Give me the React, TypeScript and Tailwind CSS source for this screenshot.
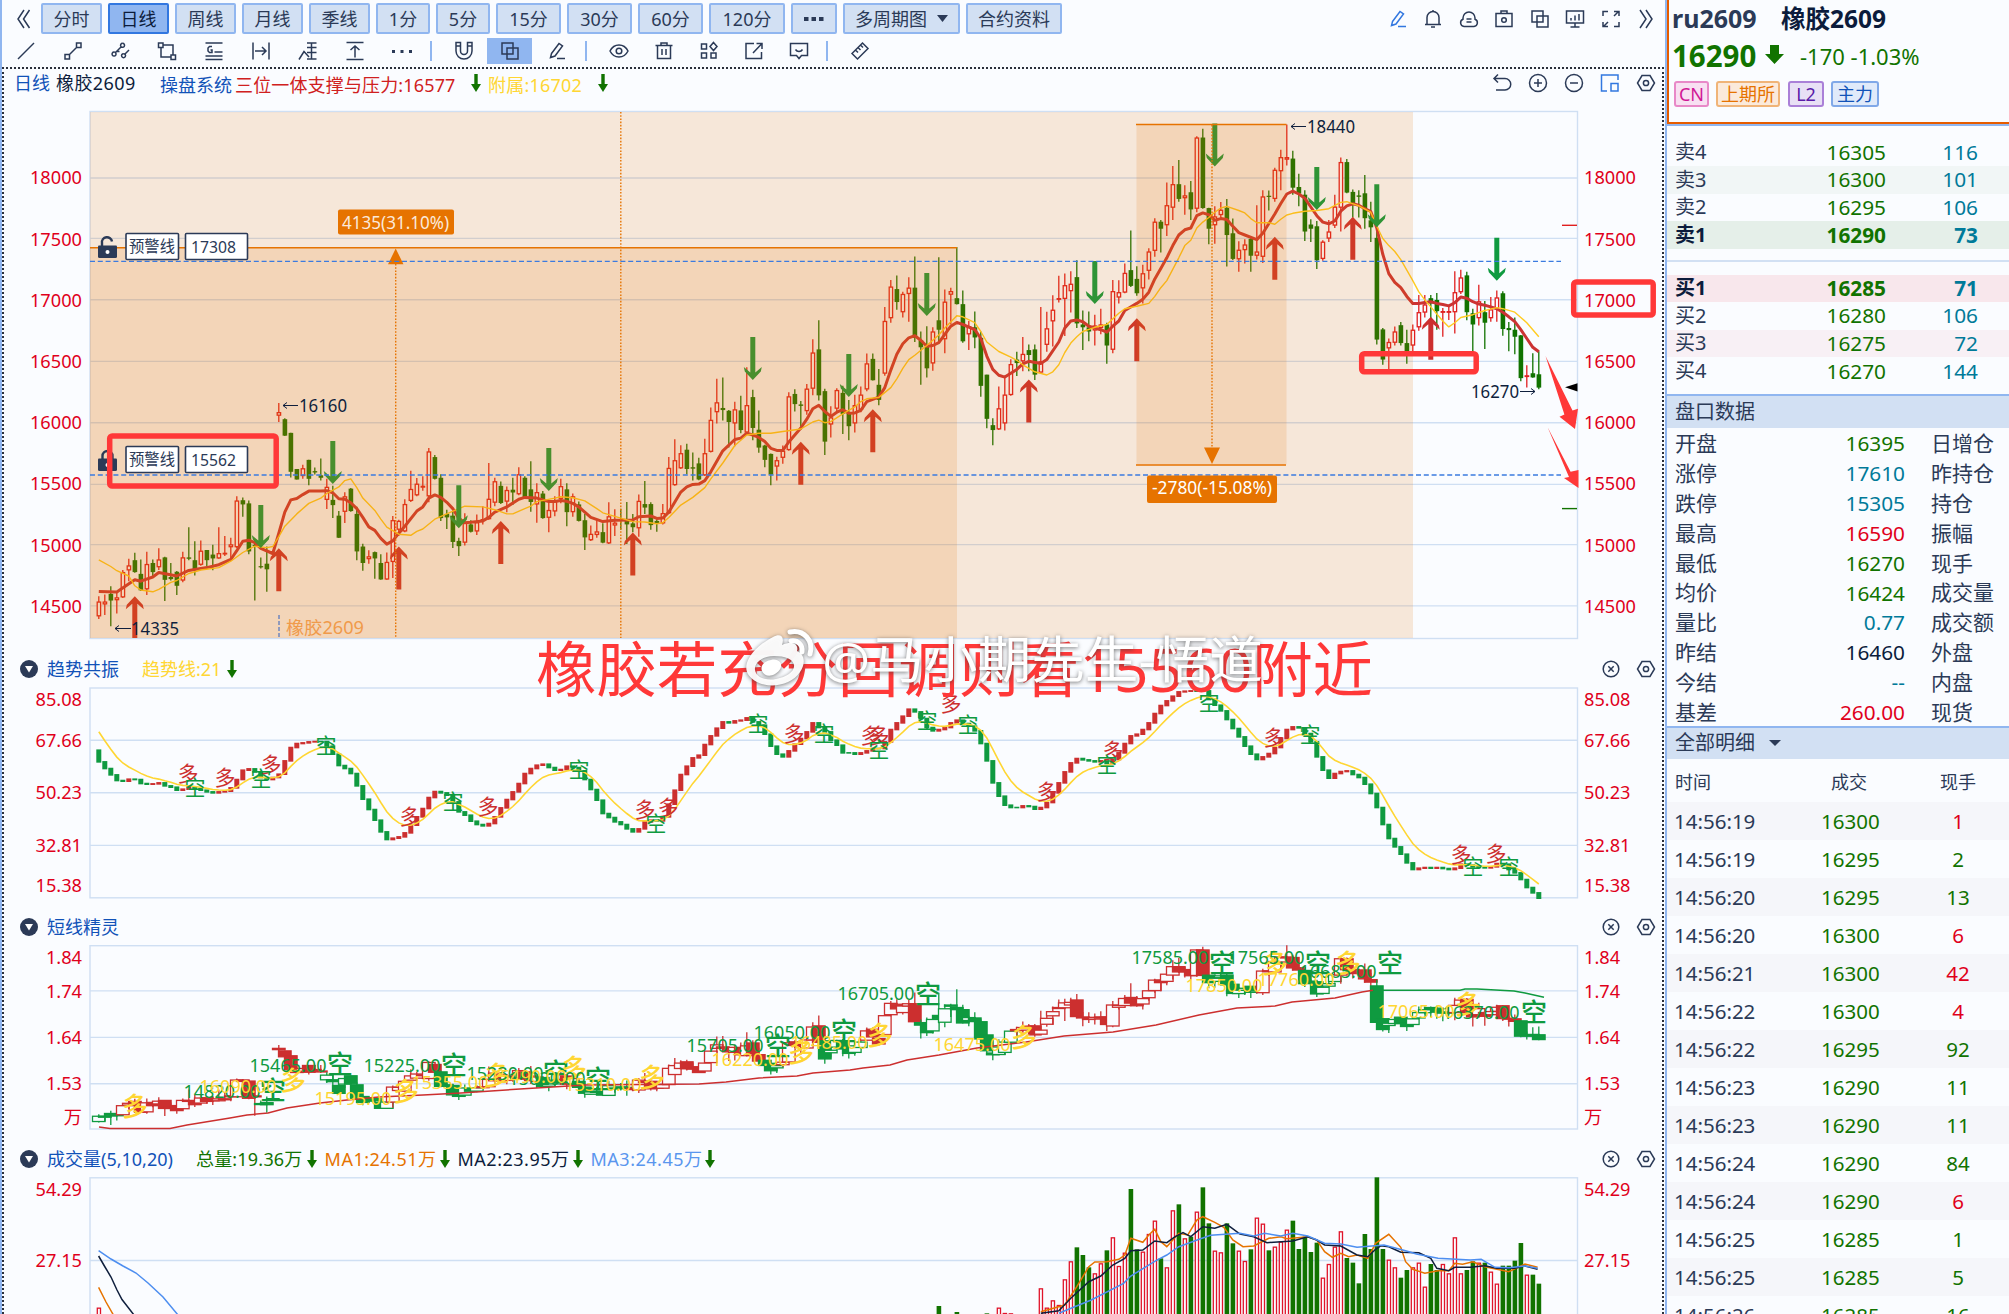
import type { ReactNode } from "react";

type Point = [number, number];

// one entry per day: direction, then high / body top / body bottom / low
const DAYS = `r1415,1430,1472,1480 r1410,1430,1438,1468 g1386,1408,1427,1500 r1405,1418,1426,1464 r1340,1346,1418,1420 r1308,1327,1341,1372 g1291,1312,1346,1348 g1310,1351,1398,1400 r1288,1323,1395,1411 g1310,1320,1346,1358
r1278,1310,1332,1340 g1302,1304,1368,1428 g1320,1360,1366,1370 g1343,1345,1385,1411 r1288,1304,1370,1375 g1218,1304,1308,1312 g1258,1312,1338,1356 r1256,1285,1325,1328 g1283,1283,1312,1330 g1268,1296,1307,1341
r1218,1292,1307,1308 r1243,1291,1295,1300 r1248,1267,1275,1310 r1130,1142,1275,1278 g1133,1141,1153,1188 g1142,1150,1287,1295 g1265,1268,1270,1427 g1304,1329,1331,1336 g1273,1322,1338,1402 r1285,1290,1294,1298
r864,890,900,918 g907,910,957,958 g949,949,1060,1076 g1052,1052,1082,1082 r1040,1050,1072,1080 g1026,1026,1080,1098 g1048,1058,1062,1068 g1022,1070,1077,1085 r1080,1103,1140,1166 g1100,1140,1155,1192
g1172,1185,1248,1249 r1118,1130,1174,1206 g1106,1108,1172,1174 g1160,1180,1287,1312 g1265,1273,1320,1342 r1284,1301,1309,1322 g1287,1289,1307,1365 g1295,1320,1367,1368 r1290,1317,1367,1368 r1186,1198,1317,1363
r1197,1200,1225,1243 r1138,1152,1230,1232 r1057,1109,1143,1146 r1078,1094,1127,1130 r1073,1100,1105,1114 r992,1002,1130,1147 g1012,1018,1080,1082 g1067,1077,1192,1200 g1168,1180,1190,1223 g1172,1185,1260,1277
g1248,1257,1272,1300 r1178,1205,1262,1270 g1198,1210,1231,1233 r1182,1204,1230,1240 r1158,1195,1200,1210 r1035,1137,1195,1197 r1077,1087,1148,1158 g1088,1100,1149,1152 r1102,1112,1145,1175 g1077,1111,1119,1155
r1047,1067,1124,1127 g1073,1077,1135,1137 g1030,1110,1146,1174 r1093,1118,1153,1205 g1115,1122,1192,1194 r1147,1169,1191,1232 r1130,1143,1173,1187 r1080,1101,1137,1150 g1093,1110,1175,1215 r1122,1130,1175,1188
g1145,1153,1200,1202 g1180,1198,1247,1283 r1213,1237,1255,1257 r1195,1230,1240,1248 g1207,1232,1262,1264 r1147,1187,1264,1266 r1167,1205,1213,1243 g1165,1196,1200,1225 g1146,1200,1210,1266 g1180,1207,1218,1232
r1125,1143,1221,1245 g1086,1152,1162,1180 g1147,1152,1212,1225 g1195,1200,1207,1231 r1152,1178,1207,1210 r1018,1049,1178,1180 r967,1027,1098,1100 r984,1007,1050,1052 g980,997,1052,1067 g1005,1047,1051,1085
g1020,1036,1082,1084 r966,1007,1070,1072 r877,912,1003,1005 r795,862,890,922 g791,878,884,914 g884,886,918,991 r860,882,922,987 g843,885,941,950 r762,870,948,955 g826,847,935,970
g885,940,991,1006 g983,985,1026,1047 g1008,1009,1068,1098 r1017,1027,1045,1085 r985,1000,1020,1037 r833,845,998,1000 g825,838,867,888 g858,868,872,940 r810,823,887,897 r682,720,823,842
g628,711,842,857 g823,830,974,1012 r873,905,925,962 r822,827,880,893 g815,835,895,952 g855,893,930,970 r840,870,922,948 r817,840,883,890 r723,751,825,830 g723,738,799,800
g767,812,855,870 r590,630,780,786 r513,532,622,635 g500,539,576,598 r547,553,605,620 r505,535,553,632 g446,535,678,690 g660,685,705,812 g645,703,765,791 r648,660,751,772
g448,628,655,690 r540,575,682,722 r535,545,555,640 g419,565,582,583 g543,582,688,692 r630,645,668,713 g603,648,677,708 g660,678,815,846 g783,783,909,936 g907,927,941,984
r817,879,939,941 r787,840,922,942 r739,753,841,843 g718,740,750,787 r676,724,745,773 g697,713,727,773 g697,711,783,798 r590,745,777,780 r604,651,698,718 r557,598,631,703
r501,565,568,577 r495,528,567,673 r488,524,545,606 g457,505,637,650 g600,640,648,713 g603,648,660,688 r612,643,657,700 r595,640,650,668 g635,640,700,752 r513,545,712,722
r514,548,563,580 r466,493,549,551 g372,485,530,533 g474,510,551,558 r470,494,537,580 r423,432,487,512 r337,347,430,447 g342,347,367,435 r235,300,357,388 r188,240,307,342
g171,240,282,290 r243,272,280,327 g231,263,312,342 r103,107,310,320 g82,107,308,310 g307,308,367,411 r303,332,357,410 r291,313,328,342 g282,307,385,475 g338,380,453,456
r403,427,454,490 r397,412,428,466 g393,396,444,490 r300,432,444,455 r257,275,447,465 g258,273,276,315 r193,199,282,290 r142,163,203,257 r70,163,170,187 g145,167,250,270
g210,248,267,303 g257,270,375,402 g340,355,367,405 g345,360,457,482 r400,404,453,458 r342,375,395,405 r270,304,358,365 r164,177,307,375 g168,177,264,266 g255,262,295,335
g257,272,276,335 g214,266,337,367 g290,343,363,405 g345,393,683,697 g650,654,740,755 r680,690,708,768 r646,660,692,700 g633,642,693,700 g655,693,716,752 r640,655,700,716
r556,605,648,658 r556,583,606,620 g556,565,580,640 g550,570,602,655 r593,602,605,675 r585,602,606,627 r488,548,605,666 r484,506,548,553 g490,500,605,628 g595,608,640,716
r527,574,622,643 g573,605,635,710 r562,597,622,632 r543,563,595,632 g545,551,653,672 g633,650,656,716 g620,655,675,725 g670,671,793,802 r756,785,789,820 g722,779,791,792 g716,782,820,825`
  .split(/\s+/)
  .map((d) => {
    const [high, top, bottom, low] = d.slice(1).split(",").map(Number);
    return { up: d[0] === "r", high, top, bottom, low };
  });

const SUPPORT =
  "0,1401 3,1403 6,1368 7,1372 9,1360 10,1347 13,1357 15,1341 18,1333 20,1325 22,1310 23,1285 24,1258 25,1255 26,1262 27,1278 29,1293 30,1235 31,1175 32,1140 33,1136 34,1125 35,1115 37,1115 38,1114 39,1120 40,1137 41,1138 42,1148 43,1165 44,1190 45,1217 46,1227 47,1250 48,1266 49,1257 50,1235 51,1215 53,1172 54,1160 55,1135 56,1126 57,1133 58,1147 59,1165 60,1192 61,1205 62,1204 64,1200 65,1190 66,1175 68,1160 70,1138 71,1133 73,1135 74,1140 75,1145 76,1145 77,1142 78,1144 79,1150 80,1160 82,1190 84,1202 86,1198 89,1197 90,1188 92,1186 93,1193 94,1192 95,1175 97,1118 98,1103 99,1096 100,1095 101,1085 102,1060 104,1000 106,968 107,964 108,950 109,955 110,962 111,974 112,993 113,999 114,999 115,975 117,935 118,910 119,880 120,870 121,888 122,902 123,890 124,883 125,893 126,892 127,885 128,860 130,847 131,820 132,770 133,725 134,695 135,678 136,672 137,685 138,702 139,700 140,692 141,668 142,645 143,634 144,640 146,655 147,680 148,730 149,768 150,785 151,790 153,768 154,752 155,745 157,751 158,740 160,690 161,650 162,630 163,627 164,632 165,645 167,655 168,662 169,645 170,630 171,600 173,580 174,568 175,548 176,510 177,480 178,450 179,415 180,385 181,370 182,365 183,330 184,322 185,327 186,343 187,338 188,341 189,360 190,378 191,385 193,398 194,380 196,325 197,295 198,268 199,260 200,268 201,280 202,305 203,330 204,348 205,353 206,345 207,317 208,302 209,296 210,300 211,310 212,318 213,365 214,440 215,495 216,520 217,535 218,560 219,580 220,580 221,577 222,575 223,580 224,583 225,587 226,578 227,562 228,565 229,575 230,582 231,585 232,590 233,595 234,605 235,618 236,632 237,655 238,680 239,705 240,718";
const ATTACHED =
  "0,1311 2,1330 3,1342 5,1357 6,1385 7,1397 9,1402 10,1395 12,1375 13,1370 15,1350 17,1340 20,1333 22,1315 24,1290 26,1272 28,1276 29,1273 30,1245 31,1215 33,1180 35,1150 37,1135 38,1122 40,1103 41,1085 42,1080 43,1105 44,1135 46,1170 47,1195 48,1218 50,1238 52,1241 53,1230 54,1223 56,1195 58,1180 60,1165 61,1158 64,1160 66,1168 68,1180 69,1180 71,1165 72,1158 73,1145 76,1135 77,1131 79,1134 81,1143 83,1165 84,1177 87,1192 89,1202 91,1203 93,1208 94,1205 95,1190 97,1155 99,1133 101,1105 102,1080 104,1035 106,985 108,955 110,950 112,950 114,945 117,938 119,918 120,913 121,920 122,917 124,895 126,875 127,860 128,852 130,848 132,820 133,795 134,765 135,740 136,728 138,700 140,670 141,650 143,615 144,618 146,635 147,660 148,690 150,717 152,733 153,742 154,755 156,775 158,784 159,775 160,755 161,720 162,693 163,675 164,660 166,648 168,640 170,608 171,595 173,588 175,580 176,560 177,535 178,515 180,450 181,415 182,400 183,365 184,348 185,335 186,320 187,308 188,303 190,315 191,322 192,338 193,350 195,350 196,354 197,340 198,328 199,323 201,317 203,315 205,310 207,292 208,290 210,302 212,320 213,360 214,395 215,415 216,432 217,455 218,485 219,515 220,547 221,570 222,590 223,610 224,630 225,647 226,635 227,620 229,612 231,600 233,592 234,595 236,605 237,620 238,635 239,655 240,675";

const DOWN_ARROWS: Point[] = [[27, 1155], [39, 972], [60, 1098], [75, 992], [109, 676], [125, 724], [138, 493], [166, 459], [186, 67], [203, 191], [213, 240], [233, 393]];
const UP_ARROWS: Point[] = [[6, 1415], [30, 1278], [50, 1273], [67, 1200], [89, 1233], [117, 974], [129, 882], [155, 797], [173, 622], [196, 390], [209, 333], [222, 618]];

const TREND = [
  365, 385, 404, 421, 423, 417, 418, 430, 432, 431, 428, 437, 441, 450, 447, 441, 445, 450, 455, 458, 455, 453, 443, 418, 390, 386, 395, 412, 418, 412,
  402, 362, 322, 310, 308, 305, 304, 304, 318, 342, 376, 385, 400, 437, 477, 508, 540, 575, 598, 594, 590, 578, 555, 530, 505, 472, 454, 458, 465, 485,
  515, 525, 543, 553, 557, 550, 530, 503, 478, 455, 430, 400, 385, 375, 372, 382, 390, 388, 378, 382, 392, 418, 448, 480, 520, 532, 545, 553, 566, 575,
  566, 545, 540, 542, 530, 492, 450, 403, 378, 353, 345, 313, 287, 264, 245, 248, 242, 240, 233, 245, 255, 282, 318, 342, 350, 332, 312, 295, 275, 248,
  262, 275, 300, 315, 338, 338, 342, 338, 332, 325, 325, 305, 268, 248, 228, 207, 215, 235, 262, 272, 268, 262, 248, 240, 250, 258, 272, 310, 362, 428,
  468, 495, 502, 502, 497, 499, 507, 502, 487, 458, 428, 395, 368, 355, 359, 362, 365, 362, 370, 358, 338, 310, 287, 282, 268, 248, 220, 196, 182, 168,
  155, 153, 152, 153, 152, 178, 195, 212, 238, 265, 290, 318, 342, 358, 350, 340, 322, 295, 268, 260, 263, 280, 305, 350, 390, 414, 400, 394, 392, 403,
  412, 432, 460, 502, 553, 595, 620, 642, 668, 688, 684, 682, 684, 682, 685, 688, 684, 672, 675, 680, 682, 683, 680, 670, 672, 688, 698, 718, 742, 758, 774,
];

const TREND_LONG: Point[] = [[188, 773], [225, 777], [271, 764], [410, 816], [488, 806], [645, 809], [668, 807], [794, 733], [871, 735], [879, 735], [951, 703], [1047, 791], [1113, 750], [1274, 737], [1461, 854], [1496, 853]];
const TREND_SHORT: Point[] = [[195, 787], [261, 778], [326, 745], [453, 801], [579, 769], [656, 823], [758, 723], [824, 733], [927, 720], [879, 749], [968, 724], [1209, 702], [1107, 764], [1310, 734], [1473, 866], [1509, 866]];

// stretches where the short-term system is in its green state
const GREEN_RUNS: Point[] = [[0, 3], [27, 29], [38, 48], [57, 63], [74, 76], [80, 88], [111, 113], [121, 127], [137, 152], [185, 193], [201, 206], [213, 225], [237, 240]];

const SHORT_LABELS: [number, number, string][] = [
  [222, 1091, "14820.00"], [288, 1065, "15465.00"], [402, 1065, "15225.00"], [505, 1073, "15230.00"], [547, 1078, "15020.00"], [725, 1045, "15705.00"], [792, 1032, "16050.00"],
  [876, 993, "16705.00"], [1170, 957, "17585.00"], [1266, 957, "17565.00"], [1338, 971, "16685.00"], [1481, 1012, "16370.00"],
];
const LONG_LABELS: [number, number, string][] = [
  [238, 1086, "16090.00"], [353, 1098, "15195.00"], [450, 1082, "15355.00"], [528, 1076, "15490.00"], [603, 1084, "15310.00"], [750, 1059, "16220.00"], [829, 1042, "16485.00"],
  [972, 1044, "16475.00"], [1224, 985, "17850.00"], [1296, 979, "17760.00"], [1416, 1011, "17065.00"],
];
const SHORT_MARKS: Point[] = [[273, 1091], [340, 1065], [454, 1066], [556, 1073], [598, 1080], [778, 1047], [844, 1032], [928, 995], [1222, 964], [1318, 964], [1390, 964], [1534, 1013]];
const LONG_MARKS: Point[] = [[135, 1107], [293, 1081], [406, 1092], [497, 1076], [574, 1069], [652, 1078], [801, 1053], [880, 1036], [1024, 1038], [1275, 964], [1348, 964], [1468, 1005]];

const VOLUMES: [number, string][] = [
  [0, "r1193"], [140, "g1188"], [143, "g1206"], [148, "g1210"], [150, "r1193"], [151, "r1209"], [152, "r1210"],
  ..."r1135 r1193 r1171 r1185 r1108 r1054 g1012 g1035 g1072 r1090 r1060 g1021 r982 r1068 r1028 g837 g1018 r1025 r972 r932 g1045 r1072 r901 g883 r985 g980 r905 g832 g940 r1022 r1027 g940 g1000 r1022 r1053 g1018 r923 r941 g1021 r1010 r995 r959 g932 g1017 g980 g1026 g998 r1103 r1062 r1010 r964 g1044 g1058 g1120 g972 g1017 g802 g1017 r1049 r1072 g1103 g1080 r1072 r1058 r1130 g1062 g1080 r1062 r1090 r982 r1090 g1080 g1054 r1058 g1058 r1085 r1121 g1067 g1067 g1052 g999 r1094 g1094 g1121"
    .split(" ")
    .map((v, i): [number, string] => [157 + i, v]),
];

const MA5 = "157,1205 161,1185 163,1130 165,1070 166,1056 168,1055 170,1048 171,1035 172,985 174,997 175,975 176,958 177,995 178,1010 180,970 181.5,975 183,930 184,920 186,937 187.5,952 189,990 190.7,1010 192.5,1008 195,985 197,980 198,986 201.5,980 203,990 204.3,1025 205.6,1042 207,1030 208.3,1040 209.7,1035 211.5,1045 212.8,1000 215,973 217,1012 217.8,1055 219,1078 221,1090 223.2,1082 225,1082 226,1060 227.3,1063 229,1055 231,1070 235,1085 237.7,1062 239.8,1072";
const MA10 = "157,1210 160,1202 162,1165 165,1115 167,1098 169,1065 171,1045 172,1022 174,1020 176,993 178,998 179.4,980 180.7,968 182,980 184,950 186,955 188,943 190.2,972 192.5,980 194.7,998 199,993 201.5,980 203,990 204.3,1005 207,1008 209.7,1035 211.5,1040 212.8,1018 213.7,1007 215,1010 217,1027 220,1028 222,1045 223,1075 225,1082 226,1072 228.6,1072 231,1067 233,1075 236,1075 237.7,1068 239.8,1078";
const MA20 = "160,1210 165.4,1170 170.8,1120 172,1098 176.2,1052 178,1035 180,1010 183.4,988 185.3,976 190.2,970 192.5,978 194.3,970 197,978 199,970 201.5,978 204.3,1000 207,1002 209.7,1012 214.2,1005 217.8,1022 219.6,1032 223.2,1045 228.6,1050 230.4,1048 232.7,1072 235,1073 237.7,1068 239.8,1075";

const RED = "#e01f1f";
const GREEN = "#117300";
const SIGNAL_RED = "#cc2f2f";
const SIGNAL_GREEN = "#0f9a40";
const YELLOW = "#ffd633";
const GRID = "#cfdff3";
const NAVY = "#2b3a57";

const barX = (i: number) => 98.8 + i * 6;
const priceY = (v: number) => 100 + v / 2.851;
const shortY = (v: number) => 945.3 + (v - 70) * 0.1257;
const trendY = (v: number) => 640 + v / 3;
const volumeY = (v: number) => 910 + v / 3;

function line(data: string, y: (v: number) => number) {
  return data
    .split(" ")
    .map((p) => {
      const [i, v] = p.split(",").map(Number);
      return `${barX(i)},${y(v).toFixed(1)}`;
    })
    .join(" ");
}

function Label({ x, y, size = 18, fill, anchor = "start", width, weight, children }: { x: number; y: number; size?: number; fill: string; anchor?: "start" | "middle" | "end"; width?: number; weight?: number; children: ReactNode }) {
  return (
    <text x={x} y={y} dy="0.36em" fontSize={size} fill={fill} textAnchor={anchor} fontWeight={weight} textLength={width} lengthAdjust="spacingAndGlyphs">
      {children}
    </text>
  );
}

function Axis({ labels }: { labels: [string, number][] }) {
  return (
    <>
      {labels.map(([text, y]) => (
        <g key={text}>
          <Label x={82} y={y} fill="#e0001b" size={18.2} anchor="end">{text}</Label>
          <Label x={1584} y={y} fill="#e0001b" size={18.2}>{text}</Label>
        </g>
      ))}
    </>
  );
}

function Frame({ top, bottom, rows }: { top: number; bottom: number; rows: number[] }) {
  return (
    <g stroke={GRID} strokeWidth="1.4" fill="none">
      <rect x="90" y={top} width="1487.5" height={bottom - top} />
      {rows.map((y) => (
        <line key={y} x1="90" x2="1577" y1={y} y2={y} />
      ))}
    </g>
  );
}

function PriceChart() {
  return (
    <svg className="block h-[558px] w-[1658px]" viewBox="4 96 1658 558">
      <Frame top={111.5} bottom={638.5} rows={[178, 238.4, 299.7, 361.4, 422.8, 484.4, 544.6, 605.9]} />
      <Axis labels={[["18000", 177.5], ["17500", 239.5], ["17000", 300.5], ["16500", 361.5], ["16000", 422.5], ["15500", 483.5], ["15000", 545.5], ["14500", 606.5]]} />
      {DAYS.map((d, i) => {
        const x = barX(i);
        const c = d.up ? RED : GREEN;
        const top = priceY(d.top);
        const h = Math.max(priceY(d.bottom) - top, 1.2);
        return (
          <g key={i}>
            <line x1={x} x2={x} y1={priceY(d.high)} y2={priceY(d.low)} stroke={c} strokeWidth="1.3" />
            {d.up ? (
              <rect x={x - 1.6} y={top + 0.5} width="3.4" height={Math.max(h - 1, 0.6)} fill="#fafcff" stroke={c} strokeWidth="1.3" />
            ) : (
              <rect x={x - 2.2} y={top} width="4.6" height={h} fill={c} />
            )}
          </g>
        );
      })}
      <polyline points={line(SUPPORT, priceY)} fill="none" stroke="#cc3333" strokeWidth="3" strokeLinejoin="round" />
      <polyline points={line(ATTACHED, priceY)} fill="none" stroke="#ffcc22" strokeWidth="1.4" strokeLinejoin="round" />
      {DOWN_ARROWS.map(([i, v]) => (
        <path key={i} transform={`translate(${barX(i)} ${priceY(v)})`} d="M-2.5 0h5v35.5l6.5-5.5-1 4.5-8 8.5-8-8.5-1-4.5 6.5 5.5z" fill={SIGNAL_GREEN} />
      ))}
      <clipPath id="plot"><rect x="90" y="111" width="1488" height="527" /></clipPath>
      <g clipPath="url(#plot)">
        {UP_ARROWS.map(([i, v]) => (
          <path key={i} transform={`translate(${barX(i)} ${priceY(v)})`} d="M-2.5 43h5V7.5l6.5 5.5-1-4.5-8-8.5-8 8.5-1 4.5 6.5-5.5z" fill={SIGNAL_RED} />
        ))}
      </g>
      {/* measured ranges */}
      <g fill="#e67300" fillOpacity="0.15">
        <rect x="90" y="112" width="1323" height="526" />
        <rect x="90" y="248" width="867" height="390" />
        <rect x="1136.5" y="124.5" width="150" height="340" />
      </g>
      <g stroke="#e67300" strokeWidth="1.4">
        <path d="M90 247.7H957M1136 124.5H1286.5M1136 465H1286" fill="none" />
        <path d="M395.7 264V638M620.8 112V638M1212 125V447" fill="none" strokeDasharray="1.6 1.6" />
        <path d="M395.7 248.5L403.5 264.3H388zM1212 464L1204 447.5H1220z" fill="#e67300" stroke="none" />
      </g>
      <path d="M90 261.4H1561M90 475H1561" stroke="#3b7be0" strokeWidth="1.4" strokeDasharray="5 2.8" />
      <rect x="338" y="209.5" width="116" height="25" rx="2" fill="#e67300" />
      <Label x={342} y={222.5} fill="#fbe9da" width={107}>4135(31.10%)</Label>
      <rect x="1147" y="475.5" width="130" height="27.5" rx="2" fill="#e67300" />
      <Label x={1152} y={488} fill="#fff" width={120}>-2780(-15.08%)</Label>
      <g stroke="#0f1f3d" fill="none">
        <path d="M298 405.5H283m4-3l-4 3 4 3M131 628.5H115m4-3l-4 3 4 3M1306 126.5H1291m4-3l-4 3 4 3M1520 391.5H1535m-4-3l4 3-4 3" />
        <path d="M279 615V638" stroke="#2c5fc0" strokeDasharray="4 2" />
      </g>
      <Label x={299} y={405.5} size={17.6} fill="#0f1f3d" width={48}>16160</Label>
      <Label x={131} y={628.5} size={17.6} fill="#0f1f3d" width={48}>14335</Label>
      <Label x={1307} y={127} size={17.6} fill="#0f1f3d" width={48}>18440</Label>
      <Label x={1471} y={392} size={17.6} fill="#0f1f3d" width={48}>16270</Label>
      <Label x={286} y={627.5} size={17.6} fill="#f09a4a" width={78}>橡胶2609</Label>
      {/* alert lines */}
      {([["17308", 246.5, true], ["15562", 459.5, false]] as [string, number, boolean][]).map(([price, y, open]) => (
        <g key={price} transform={`translate(0 ${y})`}>
          <path d="M99-1h17a1 1 0 0 1 1 1v10a1.5 1.5 0 0 1-1.5 1.5h-16A1.5 1.5 0 0 1 98 10V0a1 1 0 0 1 1-1z" fill={NAVY} />
          <path d={open ? "M102 0v-3.5a5 5 0 0 1 10-1.5" : "M102.500 0v-3.500a5 5 0 0 1 10 0V0"} fill="none" stroke={NAVY} strokeWidth="2.4" />
          <circle cx="107.5" cy="5.5" r="2" fill="#fff" />
          <rect x="126" y="-13" width="52.5" height="26" rx="1" fill="#fff" stroke={NAVY} strokeWidth="1.6" />
          <rect x="185.5" y="-13" width="62" height="26" rx="1" fill="#fff" stroke={NAVY} strokeWidth="1.6" />
          <Label x={129} y={0} size={15.4} fill={NAVY} width={46}>预警线</Label>
          <Label x={191} y={0.5} size={15.6} fill={NAVY} width={45}>{price}</Label>
        </g>
      ))}
      <path d="M1562 225.3H1577" stroke={RED} strokeWidth="1.4" />
      <path d="M1562 508.6H1577" stroke={GREEN} strokeWidth="1.4" />
      <path d="M1565 387.3L1577.5 383.3V391.5z" fill="#000" />
      {/* hand drawn notes */}
      <g fill="none" stroke="#ff3838" strokeWidth="5.5">
        <rect x="109.7" y="436" width="166.500" height="50" rx="2.5" />
        <rect x="1361.7" y="353.8" width="114.5" height="18" rx="2.5" />
        <rect x="1573.7" y="282" width="79.5" height="33" rx="2.5" />
      </g>
      <path d="M1545.5 356L1572.5 410.4 1578 408.7 1575 429 1559.5 416.7 1564.4 414.6zM1547.6 427.3L1570.6 471.8 1578.5 470V488L1564 478 1569 477z" fill="#ff3838" />
    </svg>
  );
}

function TrendChart() {
  let average = 275;
  const smooth = TREND.map((v, i) => {
    if (i > 0) average += (v - average) * 0.25;
    return `${barX(i)},${trendY(average).toFixed(1)}`;
  }).join(" ");
  return (
    <svg className="block h-[228px] w-[1658px]" viewBox="4 684 1658 228">
      <Frame top={688} bottom={897.8} rows={[740.2, 792.8, 845.4]} />
      <Axis labels={[["85.08", 699.5], ["67.66", 740.5], ["50.23", 792.5], ["32.81", 845.5], ["15.38", 885.5]]} />
      {TREND.map((v, i) => {
        const prev = i === 0 ? 330 : TREND[i - 1];
        const top = trendY(Math.min(v, prev)) - 0.6;
        return <rect key={i} x={barX(i) - 2.5} y={top} width="5" height={Math.abs(v - prev) / 3 + 1.6} fill={v < prev ? SIGNAL_RED : SIGNAL_GREEN} />;
      })}
      <polyline points={smooth} fill="none" stroke={YELLOW} strokeWidth="1.6" />
      {TREND_LONG.map(([x, y]) => (
        <Label key={x} x={x} y={y} size={21} fill={SIGNAL_RED} anchor="middle">多</Label>
      ))}
      {TREND_SHORT.map(([x, y]) => (
        <Label key={x} x={x} y={y} size={21} fill={SIGNAL_GREEN} anchor="middle">空</Label>
      ))}
    </svg>
  );
}

function ShortChart() {
  return (
    <svg className="block h-[202px] w-[1658px]" viewBox="4 942 1658 202">
      <Frame top={945.7} bottom={1129} rows={[990.9, 1037.4, 1083.8]} />
      <Axis labels={[["1.84", 957.5], ["1.74", 991], ["1.64", 1037], ["1.53", 1083.5], ["万", 1117]]} />
      {DAYS.map((d, i) => {
        const x = barX(i);
        const c = GREEN_RUNS.some(([a, b]) => i >= a && i <= b) ? SIGNAL_GREEN : SIGNAL_RED;
        const top = shortY(d.top);
        return (
          <g key={i} stroke={c} strokeWidth="1.3">
            <line x1={x} x2={x} y1={shortY(d.high)} y2={shortY(d.low)} />
            <rect x={x - 6.3} y={top} width="12.6" height={Math.max(shortY(d.bottom) - top, 1)} fill={d.up ? "#fafcff" : c} />
          </g>
        );
      })}
      <polyline fill="none" stroke={SIGNAL_RED} strokeWidth="1.5" points="99,1127 110,1128.5 170,1128.5 187,1125 230,1118 247,1115 268,1113 287,1108 320,1103 347,1100 379,1097 423,1095 461,1093 520,1089 585,1085 699,1084 726,1082 759,1078 797,1076 813,1073 850,1070 863,1068 890,1065 907,1060 939,1055 977,1048 1026,1042 1064,1036 1113,1032 1156,1025 1199,1015 1237,1008 1275,1006 1292,1002 1335,998 1362,992 1373,990.3" />
      <polyline fill="none" stroke={SIGNAL_GREEN} strokeWidth="1.5" points="1380,990.3 1460,990.3 1465,989 1477,989 1514,991 1525,993 1544,997.3" />
      {SHORT_MARKS.map(([x, y]) => (
        <Label key={x} x={x} y={y} size={26} weight={500} fill={SIGNAL_GREEN} anchor="middle">空</Label>
      ))}
      {LONG_MARKS.map(([x, y]) => (
        <Label key={x} x={x} y={y} size={26} weight={500} fill={YELLOW} anchor="middle">多</Label>
      ))}
      {SHORT_LABELS.map(([x, y, text]) => (
        <Label key={text} x={x} y={y} size={18.5} fill={SIGNAL_GREEN} anchor="middle" width={77}>{text}</Label>
      ))}
      {LONG_LABELS.map(([x, y, text]) => (
        <Label key={text} x={x} y={y} size={18.5} fill={YELLOW} anchor="middle" width={77}>{text}</Label>
      ))}
    </svg>
  );
}

function VolumeChart() {
  return (
    <svg className="block h-[140px] w-[1658px]" viewBox="4 1174 1658 140">
      <Frame top={1177.8} bottom={1400} rows={[1260.5]} />
      <Axis labels={[["54.29", 1189.5], ["27.15", 1260.5]]} />
      {VOLUMES.map(([i, v]) => {
        const y = volumeY(Number(v.slice(1)));
        return v[0] === "r" ? (
          <rect key={i} x={barX(i) - 1.5} y={y + 0.5} width="3.2" height="200" fill="#fafcff" stroke="#e0142a" strokeWidth="1.3" />
        ) : (
          <rect key={i} x={barX(i) - 2.2} y={y} width="4.6" height="200" fill={GREEN} />
        );
      })}
      <g fill="none" strokeWidth="1.5">
        <polyline points={line(MA5, volumeY)} stroke="#e67300" />
        <polyline points={line(MA10, volumeY)} stroke="#0f1f3d" />
        <polyline points={line(MA20, volumeY)} stroke="#4d8ef0" />
        <path d="M98.6 1287.3L106 1302 114 1316" stroke="#e67300" />
        <path d="M98.6 1256L105 1267 111 1277 117 1290 122 1299.5 134 1315" stroke="#0f1f3d" />
        <path d="M98.6 1250.7L111 1259 123 1266 136 1273 148 1283 163 1297 178 1315" stroke="#4d8ef0" />
      </g>
    </svg>
  );
}

function Icon({ d, color = NAVY, children }: { d?: string; color?: string; children?: ReactNode }) {
  return (
    <svg className="size-5 shrink-0" viewBox="0 0 20 20" fill="none" stroke={color} strokeWidth="1.5">
      {d && <path d={d} />}
      {children}
    </svg>
  );
}

const EDIT = "M4.500 12.500L12 2.500l3.500 2.500-7.500 10-4.500 1.500zM10 17.500h8";
const COPY = "M2 2h11v11H2zM7 7h11v11H7z";
const GEAR = "M6 2.500h8l4.500 7.500-4.500 7.500H6L1.500 10z";

function Gear() {
  return <Icon d={GEAR}><circle cx="10" cy="10" r="2.6" /></Icon>;
}

const DRAW_TOOLS = [
  "M2 18L18 2",
  "M2 13.500h4.500V18H2zM13.500 2H18v4.500h-4.500zM6 14L14 6",
  "M4 11a2 2 0 1 0 .1 0M12.500 2.300a2 2 0 1 0 .1 0M13.500 12.700a2 2 0 1 0 .1 0M5.500 11.500L11 6M15 13L19 9M9.500 10.500l-3 0",
  "M1.500 2H6v4.500H1.500zM14 14h4.500v4.500H14zM4 6.500V16h10M6 4h10v10",
  "M1.500 2h17M9 15h9.500M1.500 15h17M1.500 18.500h17M8 5.500H5.500L4 7v3l1.500 1.500H8V9H6.500M10.500 11h8",
  "M2 1.500v17M18 1.500v17M4 10h11M11 6l4 4-4 4",
  "M9 2h9.500M9 6.500h9.500M9 11.500h9.500M9 18h9.500M13.500 2v16M1 18.500L6 10.500l5 5.500",
  "M1.500 1.500h17M1.500 18.500h17M10 16.500V5.500M5.500 9L10 5l4.500 4",
];

const PERIODS: [string, string][] = [
  ["分时", "w-[61px]"], ["日线", "w-[61px]"], ["周线", "w-[61px]"], ["月线", "w-[61px]"], ["季线", "w-[61px]"],
  ["1分", "w-[54px]"], ["5分", "w-[54px]"], ["15分", "w-[65px]"], ["30分", "w-[65px]"], ["60分", "w-[65px]"], ["120分", "w-[76px]"],
];

function Dots() {
  return (
    <svg className="size-5" viewBox="0 0 20 20" fill={NAVY}>
      <path d="M0 8h4.500v4H0zM7.500 8h4.500v4H7.500zM15 8h4.500v4H15z" />
    </svg>
  );
}

function Toolbar() {
  return (
    <>
      <div className="flex h-[37px] items-start pt-[3px] pl-[11px] text-[18px] text-[#2b3a57]">
        <span className="mt-[6px] mr-2"><Icon d="M11 1L5 10l6 9M16.500 1l-6 9 6 9" /></span>
        <div className="flex gap-[6px]">
          {PERIODS.map(([name, width]) => (
            <button
              key={name}
              className={`${width} h-[31px] rounded-xs border-2 leading-[26px] whitespace-nowrap ${name === "日线" ? "border-[#3277e0] bg-[#90b6f0] text-[#0c1c3c]" : "border-[#90b6f0] bg-[#d2e0f3]"}`}
            >
              {name}
            </button>
          ))}
          <button className="flex h-[31px] w-[46px] items-center justify-center rounded-xs border-2 border-[#90b6f0] bg-[#d2e0f3]">
            <Dots />
          </button>
          <button className="flex h-[31px] w-[117px] items-center justify-center gap-[10px] rounded-xs border-2 border-[#90b6f0] bg-[#d2e0f3] leading-none whitespace-nowrap">
            多周期图
            <svg className="h-[7px] w-[11px]" viewBox="0 0 11 7"><path d="M0 0h11L5.500 7z" fill={NAVY} /></svg>
          </button>
          <button className="h-[31px] w-[96px] rounded-xs border-2 border-[#90b6f0] bg-[#d2e0f3] leading-[26px] whitespace-nowrap">合约资料</button>
        </div>
        <div className="mt-[6px] ml-auto flex gap-[15.5px] pr-[9px]">
          <Icon color="#3277e0" d={EDIT} />
          <Icon d="M2 15.500h16M4 15.500V8.500a6 6 0 0 1 12 0v7M8 18h4M10 2.500V1" />
          <Icon d="M5 17.500a3.800 3.800 0 0 1-1-7.300V9a6 6 0 0 1 12 0v1.200a3.800 3.800 0 0 1-1 7.300zM7.500 10h5M7.500 13h5" />
          <Icon d="M2 4.500h16v13H2zM7 4V2h6v2"><circle cx="10" cy="11" r="2.3" /></Icon>
          <Icon d={COPY} />
          <Icon d="M1.500 2h17v12h-17zM10 14v4M5.500 18h9M6 11.500V9M10 11.500V6.500M14 11.500V5" />
          <Icon d="M2 7V2.500h5M13 2.500h5V7M18 13v4.500h-5M7 17.500H2V13M13 7l4-4M7 13l-4 4" />
          <Icon d="M4 1l6 9-6 9M10 1l6 9-6 9" />
        </div>
      </div>
      <div className="flex h-[30px] items-center pb-[2px]">
        {DRAW_TOOLS.map((d) => (
          <span key={d} className="flex w-[47px] justify-center"><Icon d={d} /></span>
        ))}
        <span className="flex w-[47px] justify-center">
          <svg className="size-5" viewBox="0 0 20 20" fill={NAVY}><path d="M0 9h3v3H0zM8.500 9h3v3h-3zM17 9H20v3h-3z" /></svg>
        </span>
        <i className="mx-[5px] h-5 w-0.5 bg-[#90b6f0]" />
        <span className="ml-[3px] flex w-[47px] justify-center"><Icon d="M2 1.500v8.500a8 8 0 0 0 16 0V1.500h-4.500V10a3.500 3.500 0 0 1-7 0V1.500zM2 5h4.500M13.500 5H18" /></span>
        <span className="flex h-[26px] w-[45px] items-center justify-center bg-[#90b6f0]"><Icon d={COPY} /></span>
        <span className="flex w-[49px] justify-center"><Icon d={EDIT} /></span>
        <i className="mr-[9px] ml-[4px] h-5 w-0.5 bg-[#90b6f0]" />
        <span className="flex w-[45px] justify-center"><Icon d="M1 10c4-8 14-8 18 0-4 8-14 8-18 0z"><circle cx="10" cy="10" r="2.8" /></Icon></span>
        <span className="flex w-[45px] justify-center"><Icon d="M1.500 4.500h17M3.500 4.500v13h13v-13M7 4V2h6v2M8 8v6M12 8v6" /></span>
        <span className="flex w-[45px] justify-center"><Icon d="M2.500 3h5v5h-5zM2.500 12h5v5h-5zM12 12h5v5h-5zM14.500 1.500L18 5.500l-3.500 4L11 5.500z" /></span>
        <span className="flex w-[45px] justify-center"><Icon d="M10 2.500H2v15h15.500V11M12.500 2.500h5.500V8M18 2.500L9 12" /></span>
        <span className="flex w-[45px] justify-center"><Icon d="M1.500 2.500h17v12h-6L10 17.500l-2.500-3h-6zM6.500 8.500c1.500 2.500 5.500 2.500 7 0" /></span>
        <i className="mr-[9px] ml-[5px] h-5 w-0.5 bg-[#90b6f0]" />
        <span className="flex w-[45px] justify-center"><Icon d="M2 12.500L12.500 2l5.500 5.500L7.500 18zM5.500 9l2.500 2.500M8 6.500L10.500 9M10.500 4L13 6.500" /></span>
      </div>
    </>
  );
}

function Down() {
  return (
    <svg className="h-[18px] w-[10px] shrink-0" viewBox="0 0 10 18" fill={GREEN}><path d="M3.300 0h3.400v10H10L5 18 0 10h3.300z" /></svg>
  );
}

function PanelHeader({ title, children }: { title: string; children?: ReactNode }) {
  return (
    <div className="flex h-[30px] items-center pr-[6px] pl-4 text-[18px] leading-none whitespace-nowrap">
      <svg className="size-[18px]" viewBox="0 0 18 18"><circle cx="9" cy="9" r="9" fill={NAVY} /><path d="M5 6h8l-4 6.500z" fill="#fff" /></svg>
      <span className="ml-[9px] text-[#1152b8]">{title}</span>
      {children}
      <div className="ml-auto flex gap-[15px]">
        <Icon><circle cx="10" cy="10" r="7.8" /><path d="M7.300 7.300l5.400 5.400M12.700 7.300l-5.400 5.400" /></Icon>
        <Gear />
      </div>
    </div>
  );
}

function Watermark() {
  return (
    <svg className="absolute top-[620px] left-[528px] h-[90px] w-[860px]" viewBox="530 620 860 90">
      <Label x={536} y={670.5} size={60.5} fill="#ff3838" width={837}>橡胶若充分回调则看15560附近</Label>
      <g className="drop-shadow-[0_1px_2px_rgba(60,60,60,0.7)]">
        <path fillRule="evenodd" d="M773 637c7-4 12-1 9 8 9-4 17-2 15 6 9 4 8 14 3 21-8 13-30 17-43 10-15-8-13-20-2-32 6-6 12-10 18-13zM774 656c-12 0-20 7-19 14s10 11 21 9 19-8 18-14-9-9-20-9z" fill="#fff" fillOpacity="0.95" />
        <path fillRule="evenodd" d="M771 660c-7 1-11 6-9 11s8 6 13 3 8-8 5-12c-2-2-5-3-9-2z" fill="#fff" />
        <path d="M790 632c14-3 24 9 20 22M791 641c7-1 12 4 11 11" fill="none" stroke="#fff" strokeWidth="5" strokeLinecap="round" />
        <Label x={822} y={660} size={50} fill="#fff" width={441}>@马小期先生-悟道</Label>
      </g>
    </svg>
  );
}

const BOOK_SELL: [string, string, string, string][] = [
  ["卖4", "16305", "116", ""],
  ["卖3", "16300", "101", "bg-[#f1f6f6]"],
  ["卖2", "16295", "106", ""],
  ["卖1", "16290", "73", "bg-[#e5efe9] font-bold text-[#0c1c3c]"],
];
const BOOK_BUY: [string, string, string, string][] = [
  ["买1", "16285", "71", "bg-[#f8e7ec] font-bold text-[#0c1c3c]"],
  ["买2", "16280", "106", ""],
  ["买3", "16275", "72", "bg-[#f8f0f5]"],
  ["买4", "16270", "144", ""],
];

const QUOTE: [string, string, string, string][] = [
  ["开盘", "16395", "text-[#117300]", "日增仓"],
  ["涨停", "17610", "text-[#007a99]", "昨持仓"],
  ["跌停", "15305", "text-[#007a99]", "持仓"],
  ["最高", "16590", "text-[#e0001b]", "振幅"],
  ["最低", "16270", "text-[#117300]", "现手"],
  ["均价", "16424", "text-[#117300]", "成交量"],
  ["量比", "0.77", "text-[#007a99]", "成交额"],
  ["昨结", "16460", "text-[#0c1c3c]", "外盘"],
  ["今结", "--", "text-[#007a99]", "内盘"],
  ["基差", "260.00", "text-[#e0001b]", "现货"],
];

const TICKS: [string, string, number, boolean][] = [
  ["14:56:19", "16300", 1, true],
  ["14:56:19", "16295", 2, false],
  ["14:56:20", "16295", 13, false],
  ["14:56:20", "16300", 6, true],
  ["14:56:21", "16300", 42, true],
  ["14:56:22", "16300", 4, true],
  ["14:56:22", "16295", 92, false],
  ["14:56:23", "16290", 11, false],
  ["14:56:23", "16290", 11, false],
  ["14:56:24", "16290", 84, false],
  ["14:56:24", "16290", 6, true],
  ["14:56:25", "16285", 1, false],
  ["14:56:25", "16285", 5, false],
  ["14:56:26", "16285", 16, false],
];

function Book({ rows }: { rows: [string, string, string, string][] }) {
  return (
    <>
      {rows.map(([name, price, lots, style]) => (
        <div key={name} className={`flex h-[27.6px] items-center pl-2 text-[20.8px] leading-none ${style}`}>
          <span className="w-[100px] text-[20px]">{name}</span>
          <span className="w-[111px] text-right text-[#117300]">{price}</span>
          <span className="w-[92px] text-right text-[#007a99]">{lots}</span>
        </div>
      ))}
    </>
  );
}

function Sidebar() {
  return (
    <aside className="flex w-[344px] shrink-0 flex-col overflow-hidden border-l-2 border-[#90b6f0] text-[#2b3a57]">
      <div className="h-[124px] shrink-0 border-b-2 border-l-2 border-[#e65c00] pl-[3px]">
        <div className="flex h-[38px] items-center text-[25px] font-bold whitespace-nowrap">
          <span className="w-[109px]">ru2609</span>
          <span className="text-[24.500px] text-[#0c1c3c]">橡胶2609</span>
        </div>
        <div className="flex h-[37px] items-center text-[#117300]">
          <span className="w-[93px] text-[29.5px] font-bold">16290</span>
          <svg className="mb-1 h-[19px] w-[19px]" viewBox="0 0 19 19"><path d="M5 0h9v9h5l-9.500 10L0 9h5z" fill={GREEN} /></svg>
          <span className="ml-[16px] text-[22px] whitespace-nowrap">-170 -1.03%</span>
        </div>
        <div className="mt-[6px] ml-[2px] flex text-[18px] leading-[22px] whitespace-nowrap [&>span]:h-[26px] [&>span]:rounded-[3px] [&>span]:border-2 [&>span]:text-center">
          <span className="mr-[7px] w-[35px] border-[#e889c8] bg-[#f8e0f2] text-[#d01896]">CN</span>
          <span className="mr-[8px] w-[64px] border-[#f0b478] bg-[#fbeadb] text-[#e67300]">上期所</span>
          <span className="mr-[7px] w-[36px] border-[#aa80d8] bg-[#e8e0f5] text-[#5a1aa8]">L2</span>
          <span className="w-[48px] border-[#80a8e8] bg-[#e0eafa] text-[#1152b8]">主力</span>
        </div>
      </div>
      <div className="h-0.5 shrink-0 bg-[#90b6f0]" />
      <div className="h-[136px] shrink-0 border-b-2 border-[#d2e0f3] pt-[12.500px]">
        <Book rows={BOOK_SELL} />
      </div>
      <div className="h-[132px] shrink-0 pt-[12.500px]">
        <Book rows={BOOK_BUY} />
      </div>
      <div className="h-[34px] shrink-0 border-t-2 border-[#90b6f0] bg-[#d2e0f3] pl-2 text-[20px] leading-[31px]">盘口数据</div>
      <div className="h-[298px] shrink-0 pt-[0.500px]">
        {QUOTE.map(([name, value, color, more]) => (
          <div key={name} className="flex h-[29.9px] items-center pl-2 text-[21px] leading-none whitespace-nowrap">
            <span className="w-[100px]">{name}</span>
            <span className={`w-[130px] text-right text-[20.8px] ${color}`}>{value}</span>
            <span className="ml-[26px]">{more}</span>
          </div>
        ))}
      </div>
      <div className="flex h-[33px] shrink-0 items-center border-t-2 border-[#90b6f0] bg-[#d2e0f3] pb-0.5 pl-2 text-[20px] leading-none">
        全部明细
        <svg className="ml-[14px] h-[6px] w-[12px]" viewBox="0 0 12 6"><path d="M0 0h12L6 6z" fill={NAVY} /></svg>
      </div>
      <div className="flex h-[43px] shrink-0 items-center pt-[4px] pl-2 text-[18px]">
        <span className="w-[156px]">时间</span>
        <span className="w-[109px]">成交</span>
        <span>现手</span>
      </div>
      {TICKS.map(([time, price, lots, buy], i) => (
        <div key={i} className={`flex h-[38px] shrink-0 items-center pl-[7px] text-[20.5px] leading-none ${i % 2 ? "" : "bg-[#f5f6fa]"}`}>
          <span className="w-[147px]">{time}</span>
          <span className="w-[87px] pr-[27px] text-[#117300]">{price}</span>
          <span className={`w-[100px] text-center ${buy ? "text-[#e0001b]" : "text-[#117300]"}`}>{lots}</span>
        </div>
      ))}
    </aside>
  );
}

export default function App() {
  return (
    <main className="flex h-[1314px] w-[2009px] overflow-hidden bg-[#fafcff] font-['Noto_Sans','Noto_Sans_CJK_SC',sans-serif]">
      <section className="relative w-[1665px] shrink-0 border-l-2 border-[#90b6f0]">
        <Toolbar />
        <div className="h-[1247px] w-[1662px] overflow-hidden border-2 border-b-0 border-dotted border-[#2a2f3a]">
          <div className="flex h-[27px] items-center pr-[6px] pl-[10px] text-[18px] leading-none whitespace-nowrap">
            <span className="w-[42px] text-[#1152b8]">日线</span>
            <span className="w-[104px] tracking-[0.4px] text-[#0c1c3c]">橡胶2609</span>
            <span className="w-[75px] pt-1 text-[#1152b8]">操盘系统</span>
            <span className="w-[236px] pt-1 tracking-[0.15px] text-[#d02020]">三位一体支撑与压力:16577</span>
            <Down />
            <span className="ml-[7px] w-[110px] pt-1 tracking-[0.2px] text-[#ffd633]">附属:16702</span>
            <Down />
            <div className="ml-auto flex gap-4">
              <Icon d="M6 1.500L2 5.500l4 4M2.500 5.500H13a5.500 5.500 0 0 1 0 11.500H4" />
              <Icon d="M10 6v8M6 10h8"><circle cx="10" cy="10" r="8.5" /></Icon>
              <Icon d="M6 10h8"><circle cx="10" cy="10" r="8.5" /></Icon>
              <Icon color="#3277e0" d="M7 18H1.500V2H18v5M11 10.500h7V18h-7z" />
              <Gear />
            </div>
          </div>
          <PriceChart />
          <PanelHeader title="趋势共振">
            <span className="ml-[23px] w-[85px] text-[#ffd633]">趋势线:21</span>
            <Down />
          </PanelHeader>
          <TrendChart />
          <PanelHeader title="短线精灵" />
          <ShortChart />
          <PanelHeader title="成交量(5,10,20)">
            <span className="mr-1 ml-[23px] tracking-[0.200px] text-[#117300]">总量:19.36万</span>
            <Down />
            <span className="mr-[3px] ml-2 tracking-[0.500px] text-[#e67300]">MA1:24.51万</span>
            <Down />
            <span className="mr-[3px] ml-2 tracking-[0.500px] text-[#0c1c3c]">MA2:23.95万</span>
            <Down />
            <span className="mr-[3px] ml-2 tracking-[0.500px] text-[#5a96ee]">MA3:24.45万</span>
            <Down />
          </PanelHeader>
          <VolumeChart />
        </div>
        <Watermark />
      </section>
      <Sidebar />
    </main>
  );
}
